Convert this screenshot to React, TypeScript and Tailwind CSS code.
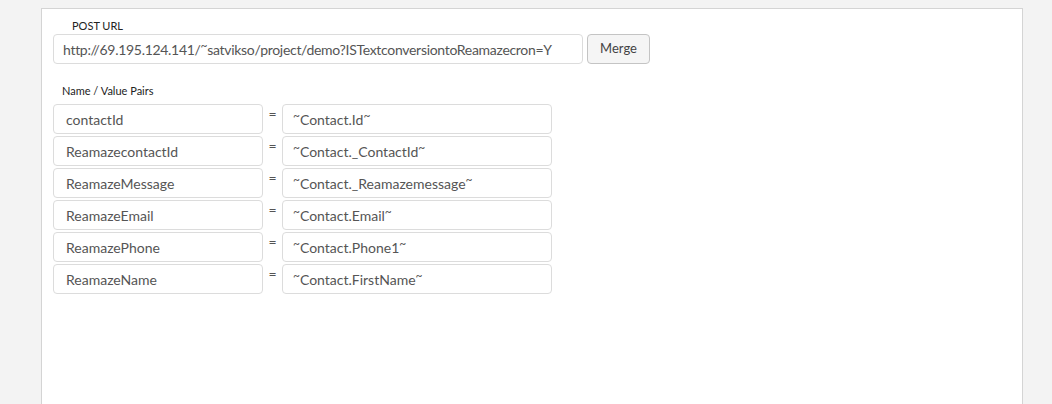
import React from "react";

const rows: [string, string][] = [
  ["contactId", "~Contact.Id~"],
  ["ReamazecontactId", "~Contact._ContactId~"],
  ["ReamazeMessage", "~Contact._Reamazemessage~"],
  ["ReamazeEmail", "~Contact.Email~"],
  ["ReamazePhone", "~Contact.Phone1~"],
  ["ReamazeName", "~Contact.FirstName~"],
];

function T({ s }: { s: string }) {
  const parts = s.split("~");
  return (
    <>
      {parts.map((p, i) => (
        <React.Fragment key={i}>
          {i > 0 && <span className="text-[12px] relative -top-[3px]">~</span>}
          {p}
        </React.Fragment>
      ))}
    </>
  );
}

export default function App() {
  return (
    <div
      className="w-[1052px] h-[404px] overflow-hidden bg-[#f3f3f3] pt-[8px] pl-[41px]"
      style={{ fontFamily: "Lato, 'Open Sans', sans-serif" }}
    >
      <div className="w-[982px] h-[420px] bg-white border border-[#d4d4d4] pt-[9px] pl-[11px]">
        <div className="h-[16px] leading-[16px] text-[11px] text-[#222] pl-[19px]">POST URL</div>
        <div className="flex items-start gap-[4px]">
          <div className="w-[530px] h-[30px] border border-[#dcdcdc] rounded-[4px] flex items-center pl-[9px] text-[14px] tracking-[-0.3px] text-[#555] whitespace-nowrap overflow-hidden">
            <T s="http://69.195.124.141/~satvikso/project/demo?ISTextconversiontoReamazecron=Y" />
          </div>
          <button className="w-[63px] h-[30px] border border-[#c4c4c4] rounded-[4px] bg-[#f5f5f5] text-[13px] text-[#444] flex items-center justify-center">
            Merge
          </button>
        </div>
        <div className="mt-[19px] h-[16px] leading-[16px] text-[11px] text-[#222] pl-[9px]">Name / Value Pairs</div>
        <div className="mt-[5px] flex flex-col gap-[2px]">
          {rows.map(([n, v]) => (
            <div key={n} className="flex items-start">
              <div className="w-[210px] h-[30px] border border-[#dcdcdc] rounded-[4px] flex items-center pl-[12px] text-[14px] text-[#555]">
                {n}
              </div>
              <div className="w-[19px] text-center text-[14px] leading-[16px] pt-[2px] text-[#555]">=</div>
              <div className="w-[270px] h-[30px] border border-[#dcdcdc] rounded-[4px] flex items-center pl-[10px] text-[14px] text-[#555] whitespace-nowrap">
                <T s={v} />
              </div>
            </div>
          ))}
        </div>
      </div>
    </div>
  );
}
